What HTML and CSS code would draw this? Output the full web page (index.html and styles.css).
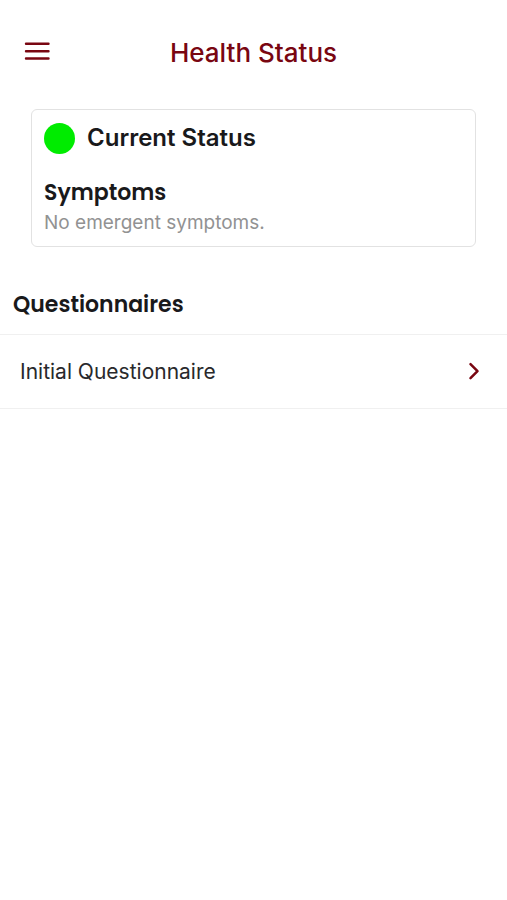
FILE: index.html
```html
<!DOCTYPE html>
<html lang="en">
<head>
    <meta charset="UTF-8">
    <meta name="viewport" content="width=device-width, initial-scale=1.0">
    <title>Health Status</title>
    <link rel="stylesheet" href="styles.css">
</head>
<body>
    <header class="topbar">
        <button class="menu" type="button" aria-label="Menu">
            <svg width="26" height="22" viewBox="0 0 26 22"><path d="M2 1.7h22.5M2 9.2h22.5M2 16.5h22.5"/></svg>
        </button>
        <h1>Health Status</h1>
    </header>
    <main>
        <section class="card">
            <div class="status">
                <span class="dot"></span>
                <h2>Current Status</h2>
            </div>
            <h3>Symptoms</h3>
            <p>No emergent symptoms.</p>
        </section>
        <section>
            <h3 class="list-title">Questionnaires</h3>
            <ul class="list">
                <li>
                    <a href="#">
                        <span>Initial Questionnaire</span>
                        <svg width="12" height="20" viewBox="0 0 12 20"><path d="M2.5 2.2l7 7-7 7"/></svg>
                    </a>
                </li>
            </ul>
        </section>
    </main>
</body>
</html>
```
FILE: styles.css
```css
* { box-sizing: border-box; }
body { margin: 0; font-family: Inter, sans-serif; background-color: #fff; color: #19191b; }
h1, h2, h3, p, ul { margin: 0; padding: 0; }
svg { display: block; fill: none; stroke: #790611; stroke-linecap: round; stroke-linejoin: round; }

.topbar { display: grid; grid-template-columns: 50px 1fr 50px; align-items: center; padding: 32px 0 0; }
.menu { justify-self: end; padding: 0; border: none; background: none; cursor: pointer; }
.menu svg { stroke-width: 2.4; }
h1 { font-size: 26px; line-height: 42px; font-weight: 500; text-align: center; color: #790611; }

.card { margin: 35px 31px 0; padding: 12px 12px 8px; border: 1px solid #e2e2e2; border-radius: 6px; }
.status { display: flex; align-items: center; gap: 12px; margin-bottom: 24px; }
.dot { width: 31px; height: 31px; border-radius: 50%; background-color: #00ec00; }
h2 { font-size: 24px; line-height: 32px; font-weight: 600; }
h3 { font-family: Poppins, Inter, sans-serif; font-size: 22px; line-height: 30px; font-weight: 600; }
.card p { font-size: 19px; line-height: 30px; color: #929292; }

.list-title { margin: 43px 13px 14px; }
.list { list-style: none; border-top: 1px solid #f0f0f0; }
.list li { border-bottom: 1px solid #f0f0f0; }
.list a { display: flex; justify-content: space-between; align-items: center; padding: 20px 27px 20px 20px; font-size: 21px; line-height: 33px; color: #29292b; text-decoration: none; }
.list svg { stroke-width: 2.5; }
```
